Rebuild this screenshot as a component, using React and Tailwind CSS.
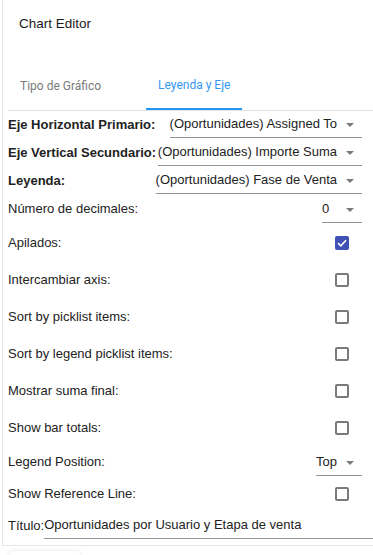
import React from 'react';

const fieldSelects = [
  { label: 'Eje Horizontal Primario:', value: '(Oportunidades) Assigned To' },
  { label: 'Eje Vertical Secundario:', value: '(Oportunidades) Importe Suma' },
  { label: 'Leyenda:', value: '(Oportunidades) Fase de Venta' },
];

const toggles = [
  { label: 'Apilados:', checked: true },
  { label: 'Intercambiar axis:', checked: false },
  { label: 'Sort by picklist items:', checked: false },
  { label: 'Sort by legend picklist items:', checked: false },
  { label: 'Mostrar suma final:', checked: false },
  { label: 'Show bar totals:', checked: false },
];

function Select({ value, className = '' }) {
  return (
    <div className={`relative shrink-0 flex items-center pr-[25px] border-b border-[#949494] text-[#222] whitespace-nowrap ${className}`}>
      <span>{value}</span>
      <span className="absolute right-[8px] top-1/2 -translate-y-[1px] w-0 h-0 border-l-[4px] border-r-[4px] border-t-[4px] border-l-transparent border-r-transparent border-t-[#7a7a7a]" />
    </div>
  );
}

function Checkbox({ checked }) {
  if (checked) {
    return (
      <div className="w-[14px] h-[14px] rounded-[2px] bg-[#3f51b5] flex items-center justify-center mr-[13px]">
        <svg width="10" height="8" viewBox="0 0 10 8" fill="none">
          <path d="M1 4.2 L3.8 6.8 L9 1.2" stroke="white" strokeWidth="1.6" />
        </svg>
      </div>
    );
  }
  return <div className="w-[14px] h-[14px] rounded-[2px] border-2 border-[#7a7a7a] mr-[13px]" />;
}

export default function App() {
  return (
    <div className="w-[373px] h-[555px] bg-white overflow-hidden relative text-[13px] text-[#222]" style={{ fontFamily: '"Liberation Sans", Arial, sans-serif' }}>
      <div className="ml-[2px] h-[546px] border-l border-b border-[#e6e6e6] flex flex-col">
        <div className="h-[48px] flex items-center pl-[16px] text-[13.5px] text-[#1a1a1a]">Chart Editor</div>

        <div className="mt-[14px] ml-[5px] flex border-b border-[#e0e0e0] text-[12px]" style={{ fontFamily: 'Roboto, sans-serif' }}>
          <div className="h-[48px] flex items-center px-3 text-[#7a7a7a]">Tipo de Gráfico</div>
          <div className="h-[48px] flex items-center px-3 ml-[33px] text-[#3797f0] border-b-2 border-[#2196f3]">Leyenda y Eje</div>
        </div>

        <div className="pl-[5px] pr-[11px] flex flex-col">
          {fieldSelects.map((f) => (
            <div key={f.label} className="h-[28px] flex items-start justify-between">
              <span className="font-bold whitespace-nowrap h-[27px] flex items-center">{f.label}</span>
              <Select value={f.value} className="h-[27px]" />
            </div>
          ))}

          <div className="h-[28px] flex items-start justify-between">
            <span className="h-[27px] flex items-center">Número de decimales:</span>
            <Select value="0" className="h-[28px] w-[40px]" />
          </div>

          <div className="mt-[1px]">
            {toggles.map((t) => (
              <div key={t.label} className="h-[37px] flex items-center justify-between">
                <span>{t.label}</span>
                <Checkbox checked={t.checked} />
              </div>
            ))}
          </div>

          <div className="h-[30px] flex items-end justify-between">
            <span className="h-[28px] flex items-center">Legend Position:</span>
            <Select value="Top" className="h-[28px]" />
          </div>

          <div className="h-[36px] flex items-center justify-between">
            <span>Show Reference Line:</span>
            <Checkbox checked={false} />
          </div>

          <div className="h-[27px] flex items-stretch -mr-[11px]">
            <span className="flex items-center">Título:</span>
            <div className="flex-1 flex items-center border-b border-[#949494] whitespace-nowrap">
              Oportunidades por Usuario y Etapa de venta
            </div>
          </div>
        </div>
      </div>

      <div className="absolute left-[10px] top-[551px] w-[70px] h-[20px] rounded-[4px] shadow-[0_0_4px_rgba(0,0,0,0.12)]" />
    </div>
  );
}
